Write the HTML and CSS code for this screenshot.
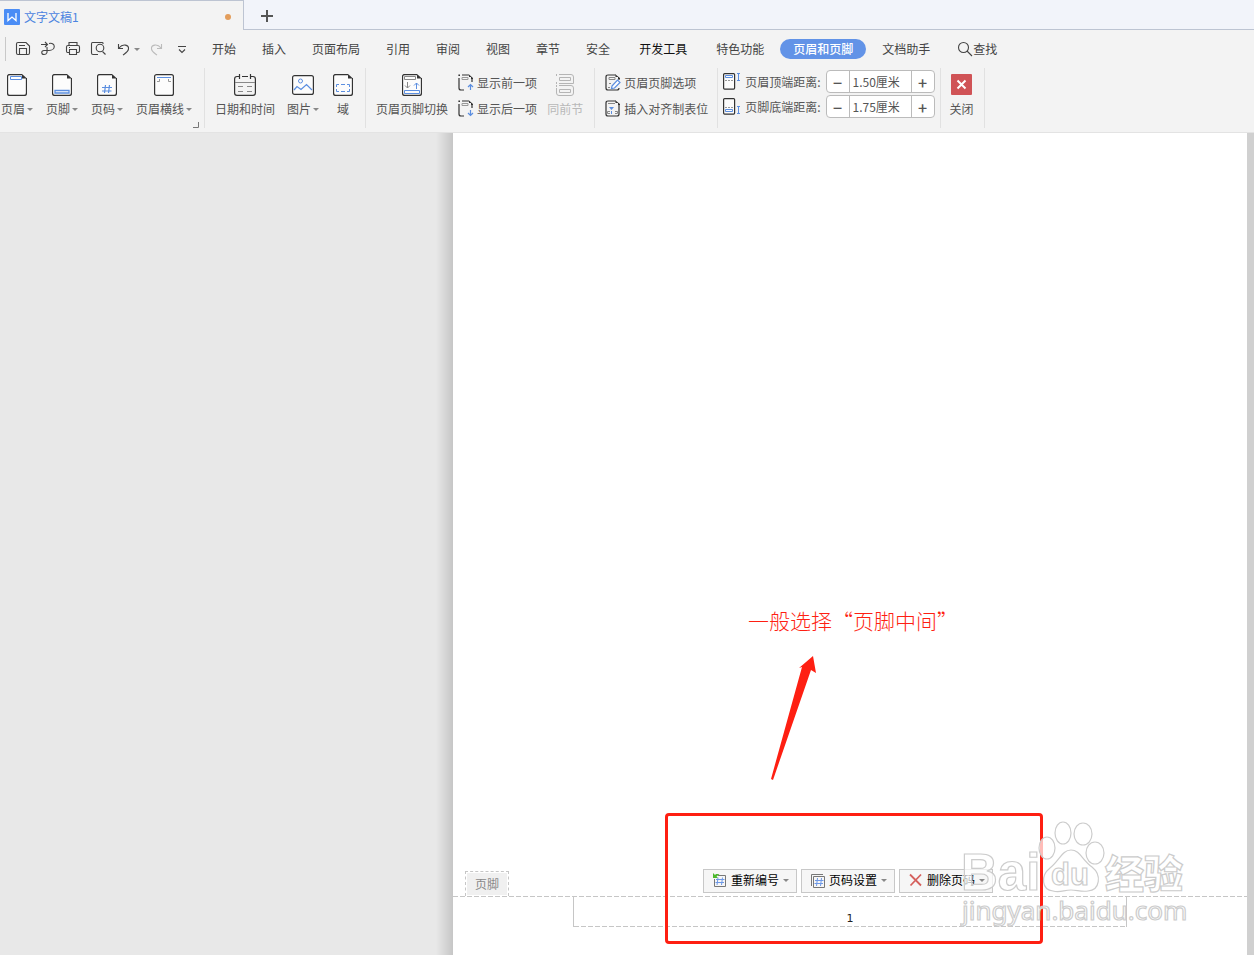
FILE: index.html
```html
<!DOCTYPE html>
<html lang="zh-CN">
<head>
    <meta charset="UTF-8">
    <meta name="viewport" content="width=device-width, initial-scale=1.0">
    <title>文字文稿1</title>
    <link rel="stylesheet" href="styles.css">
</head>
<body>
    <!-- Shared icon shapes -->
    <svg class="defs" aria-hidden="true">
        <symbol id="sheet" viewBox="0 0 20 22">
            <path d="M15 .5H3Q.5.5.5 3V19Q.5 21.5 3 21.5H17Q19.500 21.500 19.500 19V4" fill="#fcfcfc" stroke="#333" stroke-width="1.300"/>
            <path d="M15 0L20 4.500H15Z" fill="#333"/>
        </symbol>
        <symbol id="small-sheet" viewBox="0 0 16 17">
            <path d="M4 1H11M1 4V14Q1 16 3 16H6M14 5V8" fill="none" stroke="#333" stroke-width="1.200"/>
            <path d="M11 .5L15 4V5H13V3H11ZM.4.4H2V2H.4Z" fill="#333"/>
            <path d="M4 3.500H10V5.500H4Z" fill="none" stroke="#999"/>
        </symbol>
    </svg>

    <header class="title-bar">
        <div class="doc-tab">
            <svg width="16" height="16" viewBox="0 0 16 16"><rect width="16" height="16" rx="1" fill="#4b8df5"/><path d="M4 4V11.500L8 8L12 11.500V4" fill="none" stroke="#fff" stroke-width="1.300"/></svg>
            <span class="doc-name">文字文稿1</span>
            <span class="unsaved"></span>
        </div>
        <button class="new-tab" aria-label="新建">
            <svg width="12" height="12" viewBox="0 0 12 12"><path d="M6 0V12M0 6H12" stroke="#555" stroke-width="2"/></svg>
        </button>
    </header>

    <nav class="menu-bar">
        <div class="quick-access">
            <button aria-label="保存"><svg width="16" height="16" viewBox="0 0 16 16"><path d="M3 1.500H11L14.500 5V12Q14.500 13.500 13 13.500H3Q1.500 13.500 1.500 12V3Q1.500 1.500 3 1.500ZM4.500 13V7.500H11.500V13M4 4.500H10"/></svg></button>
            <button aria-label="输出为PDF"><svg width="16" height="16" viewBox="0 0 16 16"><path d="M1 3.500H7M5 1L7.500 3.500L5 6M9 2.500C16 1 16 9.500 9 9.500H4C1 9.500 1 13.500 4 13.500C8 13.500 7 10 7 6"/></svg></button>
            <button aria-label="打印"><svg width="16" height="16" viewBox="0 0 16 16"><path d="M4 4.500V1.500H12V4.500M4 11.500H2.500Q1.500 11.500 1.500 10V6Q1.500 4.500 3 4.500H13Q14.500 4.500 14.500 6V10Q14.500 11.500 13 11.500H12M4.500 8.500H11.500V13.500H4.500ZM4 6.500H5"/></svg></button>
            <button aria-label="打印预览"><svg width="16" height="16" viewBox="0 0 16 16"><path d="M13 3V2Q13 1.500 12 1.500H2.500Q1.500 1.500 1.500 3V12Q1.500 13.500 3 13.500H8M12.500 10.500L15.500 13.500"/><circle cx="10" cy="7" r="3.800"/></svg></button>
            <button aria-label="撤销"><svg width="16" height="16" viewBox="0 0 16 16"><path d="M3.500 3V7.500H8M4 7C8 2 14 4 13.500 8C13.200 11 11 12 8 14"/></svg><i class="caret"></i></button>
            <button class="muted" aria-label="恢复" disabled><svg width="16" height="16" viewBox="0 0 16 16"><path d="M12.500 3V7.500H8M12 7C8 2 2 4 2.500 8C2.800 11 5 12 8 14"/></svg></button>
            <button aria-label="更多"><svg width="16" height="16" viewBox="0 0 16 16"><path d="M4 5.500H12M5 8.500L8 11.500L11 8.500"/></svg></button>
        </div>
        <div class="tabs">
            <button>开始</button>
            <button>插入</button>
            <button>页面布局</button>
            <button>引用</button>
            <button>审阅</button>
            <button>视图</button>
            <button>章节</button>
            <button>安全</button>
            <button class="spaced dark">开发工具</button>
            <button class="spaced">特色功能</button>
            <button class="spaced active">页眉和页脚</button>
            <button class="spaced">文档助手</button>
        </div>
        <button class="search"><svg width="16" height="16" viewBox="0 0 16 16"><circle cx="6.500" cy="6.500" r="5"/><path d="M10 10L15 15"/></svg>查找</button>
    </nav>

    <div class="ribbon">
        <div class="group header-group">
            <button class="big"><svg width="20" height="22"><use href="#sheet"/><path d="M3.500 2.500H14.500V5.500H3.500Z" fill="#fff" stroke="#5b8ee0"/></svg><span>页眉<i class="caret"></i></span></button>
            <button class="big"><svg width="20" height="22"><use href="#sheet"/><path d="M3 16.500H17V19H3Z" fill="#fff" stroke="#5b8ee0" stroke-width="1.300"/></svg><span>页脚<i class="caret"></i></span></button>
            <button class="big"><svg width="20" height="22"><use href="#sheet"/><path d="M8.500 11L7.500 19M12.500 11L11.500 19M5 13.500H15M5 17H14.500" stroke="#5b8ee0" stroke-width="1.200"/></svg><span>页码<i class="caret"></i></span></button>
            <button class="big"><svg width="20" height="22"><rect x=".6" y=".6" width="18.800" height="20.800" rx="2" fill="#fcfcfc" stroke="#333" stroke-width="1.200"/><path d="M3 3.500H17" stroke="#5b8ee0"/><path d="M3 7.500H5.500V5M17 7.500H14.500V5" fill="none" stroke="#999"/></svg><span>页眉横线<i class="caret"></i></span></button>
            <svg class="launcher" width="6" height="6"><path d="M5.500 0V5.500H0" fill="none" stroke="#777"/></svg>
        </div>
        <div class="group insert-group">
            <button class="big"><svg width="22" height="22"><path d="M5 2.500H3Q.6 2.500.6 5V19Q.6 21.400 3 21.400H19Q21.400 21.400 21.400 19V5Q21.400 2.500 19 2.500H17M8 2.500H14M5.500 0V5M16.500 0V5" fill="none" stroke="#333" stroke-width="1.200"/><path d="M1 8.500H21M4 12.500H9M13 12.500H18M4 17.500H9M13 17.500H18" stroke="#888"/></svg><span>日期和时间</span></button>
            <button class="big"><svg width="22" height="22"><rect x=".6" y="1.600" width="20.800" height="18.800" rx="2" fill="#fcfcfc" stroke="#333" stroke-width="1.200"/><circle cx="8.500" cy="7" r="2" fill="none" stroke="#5b8ee0"/><path d="M2 16L5 12.500L9 15.500L14.500 10.500L20 16" fill="none" stroke="#5b8ee0" stroke-width="1.200"/></svg><span>图片<i class="caret"></i></span></button>
            <button class="big"><svg width="20" height="22"><use href="#sheet"/><path d="M3.500 13V10.500H6M8 10.500H12M14 10.500H16.500V13M3.500 15V17.500H6M8 17.500H12M14 17.500H16.500V15" fill="none" stroke="#5b8ee0"/></svg><span>域</span></button>
        </div>
        <div class="group switch-group">
            <button class="big"><svg width="20" height="22"><use href="#sheet"/><path d="M2.500 2.500H13.500V5.500H2.500ZM5.500 8V14M3 11.500L5.500 14L8 11.500" fill="none" stroke="#888"/><path d="M2.500 16.500H17.500V19.500H2.500ZM14.500 15V9M12 11.500L14.500 9L17 11.500" fill="none" stroke="#5b8ee0"/></svg><span>页眉页脚切换</span></button>
            <div class="stack">
                <button class="small"><svg width="16" height="17"><use href="#small-sheet"/><path d="M12.500 16V11M10 13L12.500 10.500L15 13" fill="none" stroke="#5b8ee0" stroke-width="1.200"/></svg>显示前一项</button>
                <button class="small"><svg width="16" height="17"><use href="#small-sheet"/><path d="M12.500 10V15.500M10 13L12.500 15.500L15 13" fill="none" stroke="#5b8ee0" stroke-width="1.200"/></svg>显示后一项</button>
            </div>
            <button class="big muted" disabled><svg width="20" height="22"><path d="M4 .5H16Q18.500.5 18.500 3V9.500H4M1.500 8V10M1.500 0V2M4.500 3.500H15.500V6.500H4.500ZM4 11.500H16Q18.500 11.500 18.500 14V19Q18.500 21.500 16 21.500H4Q1.500 21.500 1.500 19V14M1.500 11V13M4.500 15.500H15.500V18.500H4.500Z" fill="none" stroke="#b5b5b5"/></svg><span>同前节</span></button>
        </div>
        <div class="group option-group">
            <div class="stack">
                <button class="small"><svg width="16" height="17"><path d="M11 1H3Q1 1 1 3V14Q1 16 3 16H12Q14 16 14 14M14 6V4" fill="none" stroke="#333" stroke-width="1.200"/><path d="M10.500.5L15 4V5H13V3H10.500Z" fill="#333"/><path d="M4 3.500H10V5.500H4ZM3 13.500H5M4 9.500H6" fill="none" stroke="#888"/><path d="M7 12L12.500 6L15 8.500L9.500 14L6.500 14.500Z" fill="#fff" stroke="#5b8ee0" stroke-width="1.200"/></svg>页眉页脚选项</button>
                <button class="small"><svg width="16" height="17"><path d="M11 1H3Q1 1 1 3V14Q1 16 3 16H12Q14 16 14 14V4" fill="none" stroke="#333" stroke-width="1.200"/><path d="M10.500.5L15 4V5H13V3H10.500Z" fill="#333"/><path d="M3 3.500H10M5 11.500H2.500V13.500H5M10 11.500H12.500V13.500H10" fill="none" stroke="#888"/><path d="M4 7H9L6.500 10ZM6 11H7V14H6Z" fill="#5b8ee0"/></svg>插入对齐制表位</button>
            </div>
        </div>
        <div class="group distance-group">
            <div class="distance">
                <svg width="17" height="17"><rect x=".6" y=".6" width="11" height="15.500" rx="1" fill="#fcfcfc" stroke="#333" stroke-width="1.200"/><path d="M2.500 2.500H9.500V4.500H2.500ZM14 .5H17M15.500.5V7.500M14 7.500H17" fill="none" stroke="#5b8ee0"/><path d="M2 7.500H10" stroke="#999" stroke-dasharray="2 1"/></svg>
                <label for="headerTop">页眉顶端距离:</label>
                <span class="spinner"><button aria-label="减小">−</button><input type="text" id="headerTop" value="1.50厘米"><button aria-label="增大">+</button></span>
            </div>
            <div class="distance">
                <svg width="17" height="17"><rect x=".6" y=".6" width="11" height="15.500" rx="1" fill="#fcfcfc" stroke="#333" stroke-width="1.200"/><path d="M2.500 11.500H9.500V13.500H2.500ZM14 8.500H17M15.500 8.500V15.500M14 15.500H17" fill="none" stroke="#5b8ee0"/><path d="M2 9.500H10" stroke="#999" stroke-dasharray="2 1"/></svg>
                <label for="footerBottom">页脚底端距离:</label>
                <span class="spinner"><button aria-label="减小">−</button><input type="text" id="footerBottom" value="1.75厘米"><button aria-label="增大">+</button></span>
            </div>
        </div>
        <div class="group close-group">
            <button class="big"><svg width="22" height="22"><rect width="21" height="21" rx="1" fill="#d05356"/><path d="M6.500 6.500L14.500 14.500M14.500 6.500L6.500 14.500" stroke="#fff" stroke-width="2"/></svg><span>关闭</span></button>
        </div>
    </div>

    <main class="workspace">
        <div class="desk"></div>
        <section class="page">
            <div class="footer-tools">
                <span class="footer-label">页脚</span>
                <div class="footer-buttons">
                    <button><svg width="15" height="15"><path d="M6 2.500H13.500V13.500H2.500V6" fill="none" stroke="#777"/><path d="M6 4.500L5 12M10.500 4.500L9.500 12M4 6.500H12.500M3.500 9.500H12" stroke="#6d98e6"/><path d="M1 0V5H6L4.500 3.500L7.500 1H4L3 2Z" fill="#4db82e"/></svg>重新编号<i class="caret"></i></button>
                    <button><svg width="15" height="15"><path d="M1.500 13V1.500H13M3.500 3.500H14.500V14.500H3.500Z" fill="none" stroke="#777"/><path d="M7.500 5L6.500 13M11.500 5L10.500 13M5 7.500H13.500M4.500 10.500H13" stroke="#6d98e6"/></svg>页码设置<i class="caret"></i></button>
                    <button><svg width="15" height="15"><path d="M2 1.500L13 12.500M13 1.500L2.500 12.500" stroke="#d5605d" stroke-width="1.800"/></svg>删除页码<i class="caret"></i></button>
                </div>
            </div>
            <footer class="page-footer"><span class="page-number">1</span></footer>

            <p class="note">一般选择“页脚中间”</p>
            <svg class="arrow" width="46" height="124" viewBox="0 0 46 124"><path d="M0 123L31 11L28 12L42 0L45 17L40 14L2 124Z" fill="#fe1f12"/></svg>
            <div class="highlight"></div>
            <svg class="watermark" width="230" height="115" viewBox="0 0 230 115">
                <text x="1" y="72" class="wm-brand">Bai</text>
                <ellipse cx="87" cy="30" rx="8" ry="11"/>
                <ellipse cx="103" cy="15" rx="8" ry="11"/>
                <ellipse cx="123" cy="16" rx="9" ry="11"/>
                <ellipse cx="135" cy="35" rx="9" ry="11"/>
                <path d="M111 32C120 32 122 42 132 49C142 57 140 72 128 73C121 74 117 72 111 72C104 72 100 75 93 73C82 72 80 58 90 50C100 42 102 32 111 32Z"/>
                <text x="91" y="67" class="wm-du">du</text>
                <text x="145" y="70" class="wm-name">经验</text>
                <text x="2" y="102" class="wm-url">jingyan.baidu.com</text>
            </svg>
        </section>
        <div class="edge"></div>
    </main>
</body>
</html>
```
FILE: styles.css
```css
* {
    box-sizing: border-box;
}
body {
    margin: 0;
    min-height: 100vh;
    display: flex;
    flex-direction: column;
    overflow-x: hidden;
    background: #f3f3f3;
    color: #444;
    font: 12px/16px "Noto Sans CJK SC", sans-serif;
}
button, input {
    margin: 0;
    padding: 0;
    border: 0;
    background: none;
    color: inherit;
    font: inherit;
    white-space: nowrap;
}
svg {
    display: block;
    flex: none;
}
.defs {
    position: absolute;
    width: 0;
    height: 0;
}
.caret {
    display: inline-block;
    flex: none;
    border: 3px solid transparent;
    border-top-color: #888;
    border-bottom: 0;
}

/* Title bar */
.title-bar {
    display: flex;
    height: 30px;
    background: #f2f4fa;
    box-shadow: inset 0 -1px #bdc4d2;
}
.doc-tab {
    display: flex;
    align-items: center;
    gap: 4px;
    width: 244px;
    padding: 2px 12px 0 4px;
    background: #f3f3f3;
    border-top: 1px solid #bdc4d2;
    border-right: 1px solid #bdc4d2;
}
.doc-name {
    color: #4c84e0;
}
.unsaved {
    width: 6px;
    height: 6px;
    margin-left: auto;
    border-radius: 50%;
    background: #e39d5b;
}
.new-tab {
    padding: 2px 17px 0;
}

/* Menu bar */
.menu-bar {
    display: flex;
    align-items: center;
    height: 38px;
    padding-left: 5px;
}
.quick-access {
    display: flex;
    align-items: center;
    gap: 9px;
    height: 24px;
    padding: 0 9px;
    border-left: 1px solid #c8c8c8;
}
.quick-access button {
    display: flex;
    align-items: center;
    gap: 3px;
}
.quick-access svg, .search svg {
    fill: none;
    stroke: #444;
    stroke-width: 1.1;
}
.quick-access .muted svg {
    stroke: #bbb;
}
.tabs {
    display: flex;
}
.tabs button {
    height: 20px;
    padding: 0 13px;
    border-radius: 10px;
}
.tabs .spaced {
    margin-left: 3px;
}
.tabs .dark {
    color: #111;
}
.tabs .active {
    background: #6293e7;
    color: #fff;
    font-weight: 500;
}
.search {
    display: flex;
    align-items: center;
    margin-left: 14px;
}

/* Ribbon */
.ribbon {
    display: flex;
    height: 65px;
    padding-bottom: 4px;
    border-bottom: 1px solid #e3e3e3;
    color: #555;
}
.group {
    position: relative;
    display: flex;
    align-items: flex-start;
    gap: 10px;
    padding: 6px 10px 0;
    border-right: 1px solid #e1e1e1;
}
.header-group {
    gap: 13px;
    padding: 6px 12px 0 1px;
}
.insert-group {
    gap: 12px;
}
.switch-group {
    padding-right: 11px;
}
.option-group {
    padding-right: 9px;
}
.distance-group {
    flex-direction: column;
    gap: 2px;
    padding: 2px 5px 0;
}
.close-group {
    padding-left: 9px;
}
.launcher {
    position: absolute;
    right: 5px;
    bottom: 0;
}
.big {
    display: flex;
    flex-direction: column;
    align-items: center;
    gap: 5px;
    min-width: 24px;
}
.big span {
    display: flex;
    align-items: center;
    gap: 2px;
}
.stack {
    display: flex;
    flex-direction: column;
    gap: 9px;
}
.small {
    display: flex;
    align-items: center;
    gap: 3px;
}
.big.muted {
    color: #b8b8b8;
}
.distance {
    display: flex;
    align-items: center;
    gap: 5px;
}
.spinner {
    display: flex;
    width: 109px;
    height: 23px;
    border: 1px solid #bbb;
    border-radius: 4px;
    background: #fff;
}
.spinner button {
    width: 22px;
    font-size: 16px;
    font-weight: 500;
    line-height: 18px;
}
.spinner input {
    flex: 1;
    width: 0;
    padding-left: 3px;
    border: solid #bbb;
    border-width: 0 1px;
}

/* Document */
.workspace {
    flex: 1;
    display: flex;
}
.desk {
    flex: 1;
    background: linear-gradient(to left, #c6c6c6, #e8e8e8 17px);
}
.edge {
    width: 7px;
    background: #d0d0d0;
}
.page {
    position: relative;
    flex: none;
    display: flex;
    flex-direction: column;
    justify-content: flex-end;
    width: 794px;
    padding-bottom: 28px;
    background: #fff;
}
.footer-tools {
    display: grid;
    grid-template-columns: 1fr auto 1fr;
    align-items: end;
    height: 28px;
    padding-right: 4px;
    background: repeating-linear-gradient(to right, #c6c6c6 0 5px, transparent 5px 7px) bottom / 100% 1px no-repeat;
}
.footer-label {
    justify-self: start;
    margin: 0 0 1px 12px;
    padding: 4px 9px;
    border: 1px dashed #c6c6c6;
    border-bottom: 0;
    background: #f0f0f0;
    background-clip: padding-box;
    box-shadow: inset 0 0 0 1px #fff;
    color: #888;
}
.footer-buttons {
    display: flex;
    gap: 4px;
    padding-bottom: 4px;
}
.footer-buttons button {
    display: flex;
    align-items: center;
    gap: 4px;
    width: 94px;
    height: 24px;
    padding: 0 0 2px 8px;
    border: 1px solid #c8c8c8;
    background: #f6f6f6;
    color: #000;
}
.page-footer {
    margin: 0 120px;
    height: 30px;
    border: solid #c6c6c6;
    border-width: 0 1px;
    background: repeating-linear-gradient(to right, #c6c6c6 0 5px, transparent 5px 7px) bottom / 100% 1px no-repeat;
    text-align: center;
}
.page-number {
    color: #222;
    font: 11px/44px "DejaVu Sans", sans-serif;
}

/* Annotations over the page */
.note {
    position: absolute;
    left: 295px;
    bottom: 320px;
    margin: 0;
    color: #fe1f12;
    font-size: 21px;
    font-weight: 300;
    line-height: 30px;
}
.arrow {
    position: absolute;
    left: 318px;
    bottom: 175px;
}
.highlight {
    position: absolute;
    left: 212px;
    bottom: 11px;
    width: 378px;
    height: 131px;
    border: 3px solid #fe1f12;
    border-radius: 4px;
}
.watermark {
    position: absolute;
    right: 57px;
    bottom: 22px;
    fill: rgba(255, 255, 255, 0.7);
    stroke: #ccc;
    stroke-width: 1.2;
}
.wm-brand {
    font: bold 51px "Liberation Sans", sans-serif;
}
.wm-du {
    font: bold 31px "Liberation Sans", sans-serif;
}
.wm-name {
    font: 900 39px "Noto Sans CJK SC", sans-serif;
}
.wm-url {
    font: 26px "Noto Sans", sans-serif;
}
```
